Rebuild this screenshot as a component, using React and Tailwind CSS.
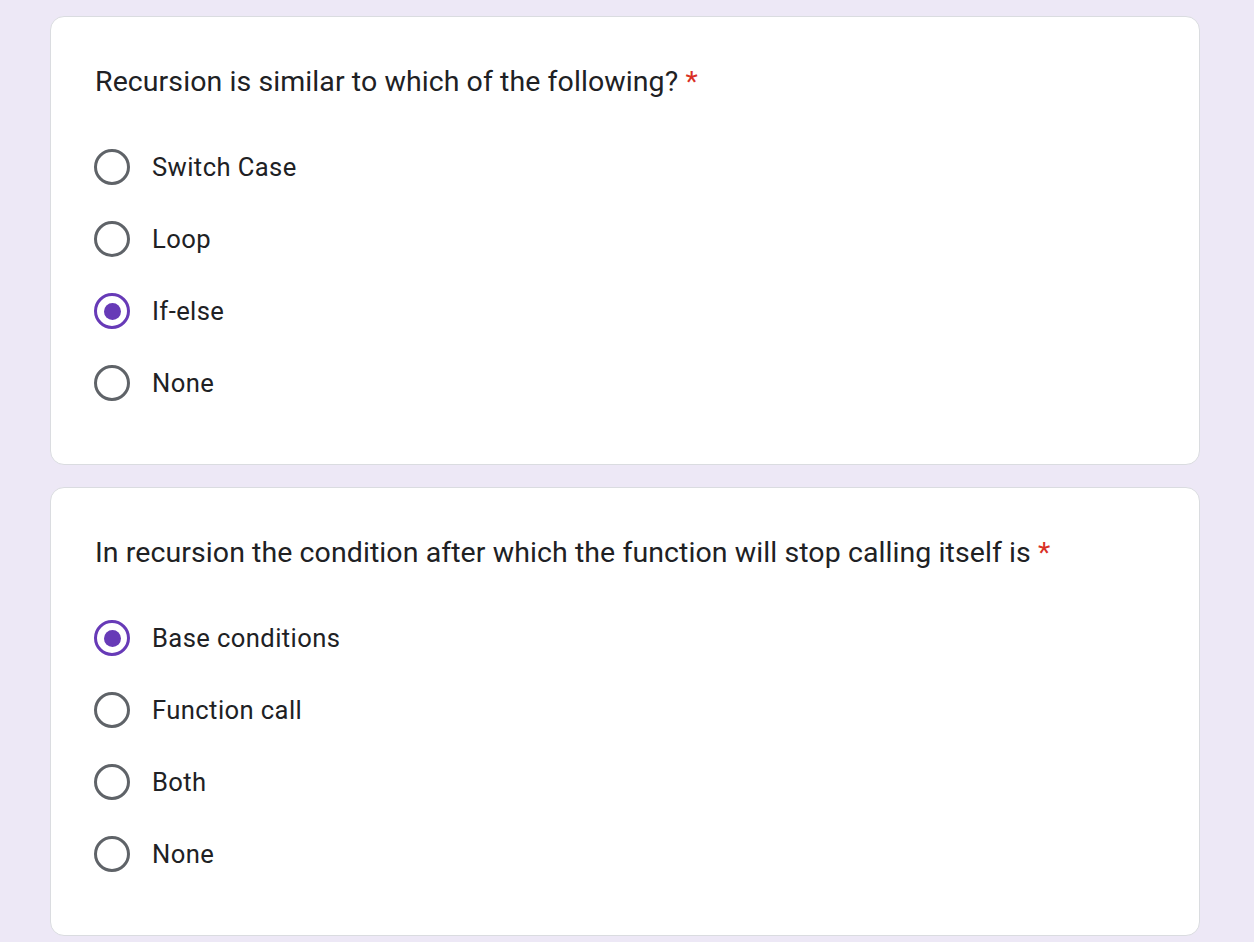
import React from "react";

const questions = [
  {
    title: "Recursion is similar to which of the following?",
    options: ["Switch Case", "Loop", "If-else", "None"],
    selected: 2,
  },
  {
    title: "In recursion the condition after which the function will stop calling itself is",
    options: ["Base conditions", "Function call", "Both", "None"],
    selected: 0,
  },
];

function Radio({ checked }) {
  return checked ? (
    <span className="flex h-[36px] w-[36px] shrink-0 items-center justify-center rounded-full border-[3.6px] border-[#673ab7]">
      <span className="h-[17px] w-[17px] rounded-full bg-[#673ab7]" />
    </span>
  ) : (
    <span className="h-[36px] w-[36px] shrink-0 rounded-full border-[3.6px] border-[#5f6368]" />
  );
}

export default function App() {
  return (
    <div
      className="min-h-[942px] bg-[#ede8f6] pt-[16px] pl-[50px] text-[#202124]"
      style={{ fontFamily: "Roboto, 'Liberation Sans', sans-serif" }}
    >
      <div className="flex w-[1150px] flex-col gap-[22px]">
        {questions.map((q, i) => (
          <div
            key={i}
            className="rounded-[14px] border border-[#dadce0] bg-white pl-[43px] pr-[43px] pt-[43px] pb-[45px]"
          >
            <div className="pl-[1px] text-[28.5px] leading-[43px] tracking-[0.08px]">
              {q.title} <span className="text-[#d93025]">*</span>
            </div>
            <div className="mt-[28px] flex flex-col">
              {q.options.map((o, j) => (
                <label key={j} className="flex h-[72px] items-center gap-[22px]">
                  <Radio checked={j === q.selected} />
                  <span className="text-[25.6px] tracking-[0.4px]">{o}</span>
                </label>
              ))}
            </div>
          </div>
        ))}
      </div>
    </div>
  );
}
